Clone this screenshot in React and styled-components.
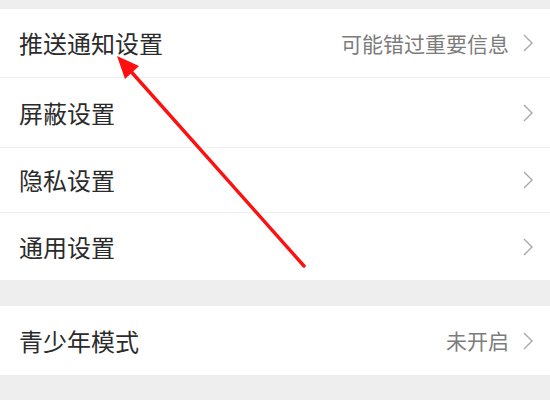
import styled, { createGlobalStyle } from "styled-components"

const GlobalStyle = createGlobalStyle`
    html, body {
        margin: 0;
        padding: 0;
        background: #ffffff;
    }
    body {
        font-family: "Noto Sans CJK SC", "Noto Sans", sans-serif;
    }
`

const Page = styled.div`
    position: relative;
    width: 550px;
    height: 412px;
    overflow: hidden;
    background: #ffffff;
`
const Gap = styled.div`
    height: ${props => props.h}px;
    background: #eeeeee;
`
const Group = styled.section`
    background: #ffffff;
`
const Row = styled.div`
    display: flex;
    align-items: center;
    height: ${props => props.h || 68}px;
    padding: 0 17px 0 19px;
    border-bottom: ${props => props.last ? "none" : "1px solid #f0f0f0"};
    box-sizing: border-box;
`
const Titulo = styled.span`
    flex: 1;
    font-size: 24px;
    color: #2b2b2b;
    line-height: 1;
`
const Valor = styled.span`
    font-size: 21px;
    color: #7c7c7c;
    margin-right: 14px;
    line-height: 1;
`
const Seta = styled.svg`
    width: 10px;
    height: 18px;
    flex-shrink: 0;
`
const Flecha = styled.svg`
    position: absolute;
    left: 0;
    top: 0;
    pointer-events: none;
`

const itens = [
    { nome: "推送通知设置", valor: "可能错过重要信息", h: 69 },
    { nome: "屏蔽设置", h: 70 },
    { nome: "隐私设置", h: 65 },
    { nome: "通用设置", h: 67, last: true }
]

function Chevron(){
    return(
        <Seta viewBox="0 0 10 18">
            <path d="M1 1 L9 9 L1 17" fill="none" stroke="#a8a8a8" strokeWidth="1.4" />
        </Seta>
    )
}

export default function App(){
    return(
        <Page>
            <GlobalStyle />
            <Gap h={9} />
            <Group>
                {itens.map(item => (
                    <Row key={item.nome} h={item.h} last={item.last}>
                        <Titulo>{item.nome}</Titulo>
                        {item.valor && <Valor>{item.valor}</Valor>}
                        <Chevron />
                    </Row>
                ))}
            </Group>
            <Gap h={26} />
            <Group>
                <Row h={69} last>
                    <Titulo>青少年模式</Titulo>
                    <Valor>未开启</Valor>
                    <Chevron />
                </Row>
            </Group>
            <Gap h={25} />
            <Flecha width="550" height="412" viewBox="0 0 550 412">
                <line x1="304" y1="266" x2="127" y2="67" stroke="#ff1010" strokeWidth="3.4" strokeLinecap="round" />
                <polygon points="117,56 139,66 125,79" fill="#ff1010" />
            </Flecha>
        </Page>
    )
}
